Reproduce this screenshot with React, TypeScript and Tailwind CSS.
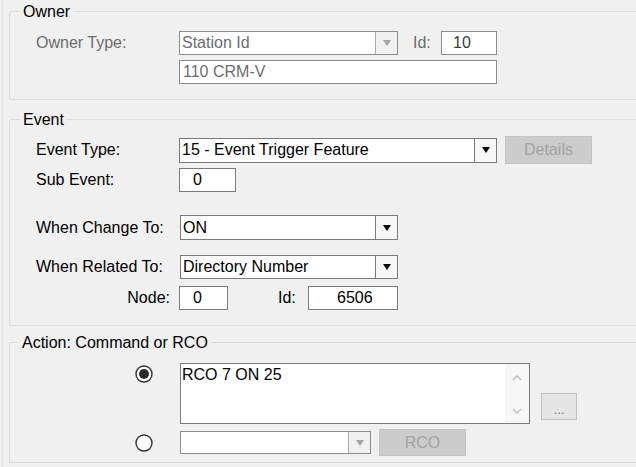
import type { ReactNode } from "react";

function Tri({ color }: { color: string }) {
  return (
    <svg width="8" height="6" viewBox="0 0 8 6">
      <polygon points="0,0 8,0 4,6" fill={color} />
    </svg>
  );
}

function Combo({ className, value, disabled }: { className: string; value: string; disabled?: boolean }) {
  return (
    <div
      className={`flex shrink-0 border bg-white ${disabled ? "border-[#8c8c8c] text-[#6d6d6d]" : "border-[#7a7a7a] text-black"} ${className}`}
    >
      <div className="flex min-w-0 flex-1 items-center pl-[2px]">{value}</div>
      <div
        className={`flex w-[22px] items-center justify-center border-l ${disabled ? "border-[#a8a8a8] bg-[#f0f0f0]" : "border-[#7a7a7a] bg-[#f7f7f7]"}`}
      >
        <Tri color={disabled ? "#a3a3a3" : "#000000"} />
      </div>
    </div>
  );
}

function Field({ className, value, gray }: { className: string; value: string; gray?: boolean }) {
  return (
    <div
      className={`flex shrink-0 items-center border bg-white ${gray ? "border-[#8c8c8c] text-[#6d6d6d]" : "border-[#7a7a7a] text-black"} ${className}`}
    >
      {value}
    </div>
  );
}

function Btn({ className, label }: { className: string; label: string }) {
  return (
    <div
      className={`flex shrink-0 items-center justify-center border border-[#c4c4c4] bg-[#cccccc] text-[#a3a3a3] ${className}`}
    >
      {label}
    </div>
  );
}

function Radio({ checked }: { checked?: boolean }) {
  return (
    <svg width="18" height="18" viewBox="0 0 18 18" className="shrink-0">
      <circle cx="9" cy="9" r="8" fill="#ffffff" stroke="#333333" strokeWidth="1.4" />
      {checked && <circle cx="9" cy="9" r="5" fill="#2b2b2b" />}
    </svg>
  );
}

function Group({ title, className, titleLeft, children }: { title: string; className: string; titleLeft: string; children: ReactNode }) {
  return (
    <div className={`relative w-[640px] shrink-0 rounded-[2px] border border-[#dcdcdc] ${className}`}>
      <span className={`absolute -top-[10px] bg-[#f0f0f0] px-[3px] ${titleLeft}`}>{title}</span>
      {children}
    </div>
  );
}

export default function App() {
  return (
    <div className="flex h-[467px] w-[636px] overflow-hidden bg-[#f0f0f0] font-['Liberation_Sans',Arial,sans-serif] text-[16px] leading-[20px] text-black">
      <div className="w-[2px] shrink-0" />
      <div className="w-px shrink-0 bg-[#e3e3e3]" />
      <div className="flex shrink-0 flex-col pl-[6px] pt-[11px]">
        {/* Owner */}
        <Group title="Owner" titleLeft="left-[10px]" className="pt-[19px] pb-[15px]">
          <div className="flex h-[24px] items-center pl-[26px]">
            <span className="w-[143px] shrink-0 text-[#6d6d6d]">Owner Type:</span>
            <Combo className="h-[24px] w-[219px]" value="Station Id" disabled />
            <span className="ml-[15px] w-[28px] shrink-0 text-[#6d6d6d]">Id:</span>
            <Field className="h-[24px] w-[56px] pl-[11px] !text-[#3c3c3c]" value="10" gray />
          </div>
          <div className="mt-[5px] flex pl-[169px]">
            <Field className="h-[24px] w-[318px] pl-[3px]" value="110 CRM-V" gray />
          </div>
        </Group>

        {/* Event */}
        <Group title="Event" titleLeft="left-[10px]" className="mt-[19px] pt-[16px] pb-[15px]">
          <div className="flex h-[28px] items-center pl-[26px]">
            <span className="w-[143px] shrink-0">Event Type:</span>
            <Combo className="h-[25px] w-[318px]" value="15 - Event Trigger Feature" />
            <Btn className="ml-[8px] h-[28px] w-[87px]" label="Details" />
          </div>
          <div className="mt-[4px] flex h-[24px] items-center pl-[26px]">
            <span className="w-[143px] shrink-0">Sub Event:</span>
            <Field className="h-[24px] w-[57px] pl-[13px]" value="0" />
          </div>
          <div className="mt-[23px] flex h-[25px] items-center pl-[26px]">
            <span className="w-[144px] shrink-0">When Change To:</span>
            <Combo className="h-[25px] w-[218px]" value="ON" />
          </div>
          <div className="mt-[15px] flex h-[24px] items-center pl-[26px]">
            <span className="w-[144px] shrink-0">When Related To:</span>
            <Combo className="h-[24px] w-[218px]" value="Directory Number" />
          </div>
          <div className="mt-[7px] flex h-[24px] items-center pl-[26px]">
            <span className="w-[143px] shrink-0 pr-[9px] text-right">Node:</span>
            <Field className="h-[24px] w-[49px] pl-[13px]" value="0" />
            <span className="ml-[50px] w-[30px] shrink-0">Id:</span>
            <Field className="h-[24px] w-[90px] pl-[28px]" value="6506" />
          </div>
        </Group>

        {/* Action */}
        <Group title="Action: Command or RCO" titleLeft="left-[9px]" className="mt-[16px] pt-[20px] pb-[6px]">
          <div className="flex items-start pl-[125px]">
            <div className="mt-[2px]">
              <Radio checked />
            </div>
            <div className="ml-[27px] flex h-[61px] w-[350px] shrink-0 border border-[#7a7a7a] bg-white">
              <div className="flex-1 pl-[1px] pt-[1px]">RCO 7 ON 25</div>
              <div className="flex w-[24px] flex-col items-center justify-between bg-[#f7f7f7] pt-[11px] pb-[9px]">
                <svg width="10" height="6" viewBox="0 0 10 6">
                  <polyline points="1,5 5,1 9,5" fill="none" stroke="#c2c2c2" strokeWidth="1.5" />
                </svg>
                <svg width="10" height="6" viewBox="0 0 10 6">
                  <polyline points="1,1 5,5 9,1" fill="none" stroke="#c2c2c2" strokeWidth="1.5" />
                </svg>
              </div>
            </div>
            <div className="ml-[11px] mt-[30px] flex h-[27px] w-[36px] shrink-0 items-end justify-center border border-[#c0c0c0] bg-[#e5e5e5] pb-[3px] text-[13px] leading-[13px] text-[#707070]">
              ...
            </div>
          </div>
          <div className="mt-[5px] flex h-[27px] items-center pl-[125px]">
            <Radio />
            <Combo className="ml-[27px] h-[23px] w-[191px]" value="" disabled />
            <Btn className="ml-[8px] h-[27px] w-[87px]" label="RCO" />
          </div>
        </Group>
      </div>
    </div>
  );
}
